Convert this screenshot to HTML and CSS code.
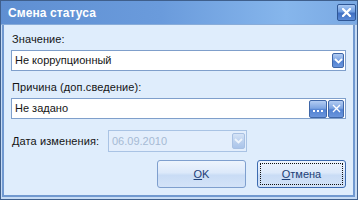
FILE: index.html
```html
<!DOCTYPE html>
<html>
<head>
<meta charset="utf-8">
<link rel="stylesheet" href="styles.css">
</head>
<body>
<div class="window">
  <div class="titlebar">
    <span class="title">Смена статуса</span>
    <span class="close"><svg width="9" height="9" viewBox="0 0 9 9"><path d="M1 1 L8 8 M8 1 L1 8" stroke="#fff" stroke-width="2.2" stroke-linecap="square"/></svg></span>
  </div>
  <div class="frame">
    <div class="content">
      <div class="label">Значение:</div>
      <div class="field f1">
        <span class="val">Не коррупционный</span>
        <span class="sbtn drop"><svg width="9" height="6" viewBox="0 0 9 6"><path d="M1 1 L4.5 4.5 L8 1" fill="none" stroke="#fff" stroke-width="1.8"/></svg></span>
      </div>
      <div class="label l2">Причина (доп.сведение):</div>
      <div class="field f2">
        <span class="val">Не задано</span>
        <span class="sbtn dots"><svg width="11" height="3" viewBox="0 0 11 3"><rect x="0" y="0" width="2" height="2" fill="#fff"/><rect x="4" y="0" width="2" height="2" fill="#fff"/><rect x="8" y="0" width="2" height="2" fill="#fff"/></svg></span>
        <span class="sbtn clear"><svg width="9" height="9" viewBox="0 0 9 9"><path d="M1 1 L8 8 M8 1 L1 8" fill="none" stroke="#fff" stroke-width="1.4"/></svg></span>
      </div>
      <div class="daterow">
        <span class="label dlabel">Дата изменения:</span>
        <div class="field date">
          <span class="val">06.09.2010</span>
          <span class="sbtn drop off"><svg width="9" height="6" viewBox="0 0 9 6"><path d="M1 1 L4.5 4.5 L8 1" fill="none" stroke="#eef4fc" stroke-width="1.8"/></svg></span>
        </div>
      </div>
      <div class="actions">
        <button class="dlg"><span class="inner"><u>O</u>K</span></button>
        <button class="dlg focus"><span class="inner"><u>О</u>тмена</span></button>
      </div>
    </div>
  </div>
</div>
</body>
</html>
```

FILE: styles.css
```css
html, body {
  margin: 0;
  padding: 0;
}
body {
  width: 358px;
  height: 200px;
  font-family: "Liberation Sans", Arial, sans-serif;
  font-size: 11px;
  color: #141414;
}
.window {
  width: 358px;
  height: 200px;
  box-sizing: border-box;
  border: 1px solid #3f5f8c;
  display: flex;
  flex-direction: column;
  background: #c6dbf4;
}
.titlebar {
  height: 23px;
  flex: none;
  display: flex;
  align-items: center;
  justify-content: space-between;
  padding-left: 7px;
  padding-right: 1px;
  background: linear-gradient(to right, #5f8fd2 0%, #6a9bdc 45%, #86b6ec 80%, #7aa9e3 100%);
  border-bottom: 1px solid #88acd9;
}
.title {
  color: #fff;
  font-weight: bold;
  font-size: 12px;
  letter-spacing: 0.1px;
  padding-top: 1px;
}
.close {
  width: 19px;
  height: 17px;
  box-sizing: border-box;
  border: 1px solid #2f5796;
  border-radius: 2px;
  background: linear-gradient(to bottom, #a8c8f3 0%, #6f9de0 45%, #3f6fc2 55%, #5a8ad6 100%);
  display: flex;
  align-items: center;
  justify-content: center;
  margin-top: -1px;
}
.frame {
  flex: 1;
  display: flex;
  border-left: 1px solid #c6dbf4;
  border-right: 2px solid #c6dbf4;
  border-bottom: 2px solid #c6dbf4;
}
.content {
  flex: 1;
  background: #dfedfc;
  border-left: 2px solid #7199d0;
  border-right: 2px solid #7199d0;
  border-bottom: 2px solid #7199d0;
  padding: 8px 7px 0 7px;
  display: flex;
  flex-direction: column;
}
.label {
  line-height: 13px;
  padding-left: 1px;
  letter-spacing: 0.1px;
}
.l2 {
  margin-top: 10px;
}
.field {
  height: 21px;
  box-sizing: border-box;
  border: 1px solid #7f9fcb;
  background: #fff;
  display: flex;
  align-items: center;
  padding-right: 1px;
}
.f1 {
  margin-top: 4px;
}
.f2 {
  margin-top: 4px;
}
.val {
  flex: 1;
  padding-left: 3px;
  line-height: 13px;
}
.sbtn {
  box-sizing: border-box;
  border: 1px solid #3f67a8;
  border-radius: 2px;
  background: linear-gradient(to bottom, #b3cdf3 0%, #7ea5e2 45%, #5282d2 55%, #6a95dc 100%);
  display: flex;
  align-items: center;
  justify-content: center;
}
.drop {
  width: 12px;
  height: 15px;
}
.dots {
  width: 18px;
  height: 18px;
  margin-right: 1px;
}
.dots svg {
  margin-top: 5px;
}
.clear {
  width: 16px;
  height: 18px;
}
.daterow {
  margin-top: 11px;
  display: flex;
  align-items: center;
}
.dlabel {
  width: 96px;
}
.date {
  width: 139px;
  height: 22px;
  background: #e3eefc;
  border-color: #a9c3e4;
  color: #a6bad4;
  padding-right: 1px;
}
.date .val {
  padding-left: 3px;
}
.off {
  width: 13px;
  height: 16px;
  border-color: #a8c0e2;
  background: linear-gradient(to bottom, #d6e4f7 0%, #bcd1ee 50%, #aac4ea 100%);
}
.actions {
  margin-top: 8px;
  display: flex;
  justify-content: flex-end;
  gap: 11px;
}
.dlg {
  width: 89px;
  height: 28px;
  box-sizing: border-box;
  border: 1px solid #7e9fce;
  border-radius: 3px;
  background: linear-gradient(to bottom, #edf4fd 0%, #dce9fa 45%, #c9dcf5 55%, #d3e3f8 100%);
  font-family: "Liberation Sans", Arial, sans-serif;
  font-size: 11px;
  font-weight: normal;
  color: #1d3f77;
  padding: 2px;
  margin: 0;
  display: flex;
}
.dlg .inner {
  flex: 1;
  display: flex;
  align-items: center;
  justify-content: center;
  border: 1px solid transparent;
}
.focus {
  border-color: #3c6bb0;
}
.focus .inner {
  border: 1px dotted #111;
}
u {
  text-decoration: underline;
  text-underline-offset: 1px;
}
```
